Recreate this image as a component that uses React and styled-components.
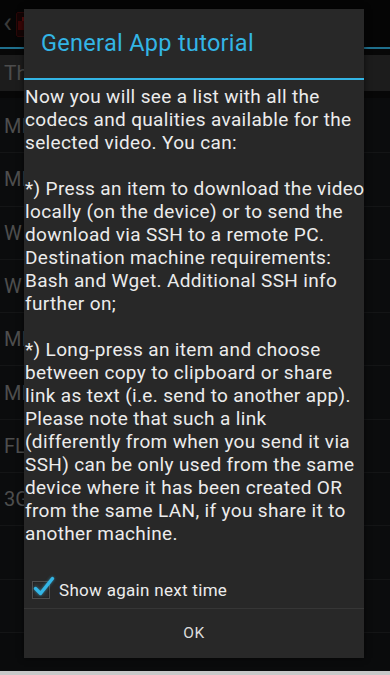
import React from 'react';
import styled, { createGlobalStyle } from 'styled-components';

const GlobalStyle = createGlobalStyle`
  html, body {
    margin: 0;
    padding: 0;
    background: #000;
  }
  body {
    font-family: Roboto, "Noto Sans", sans-serif;
    -webkit-font-smoothing: antialiased;
  }
`;

const bodyLines = [
  'Now you will see a list with all the',
  'codecs and qualities available for the',
  'selected video. You can:',
  '',
  '*) Press an item to download the video',
  'locally (on the device) or to send the',
  'download via SSH to a remote PC.',
  'Destination machine requirements:',
  'Bash and Wget. Additional SSH info',
  'further on;',
  '',
  '*) Long-press an item and choose',
  'between copy to clipboard or share',
  'link as text (i.e. send to another app).',
  'Please note that such a link',
  '(differently from when you send it via',
  'SSH) can be only used from the same',
  'device where it has been created OR',
  'from the same LAN, if you share it to',
  'another machine.',
];

const rows = ['MI', 'MI', 'W', 'W', 'MI', 'MI', 'FL', '3G', '', ''];

const App = () => {
  return (
    <>
      <GlobalStyle />
      <Screen>
        <ActionBar>
          <BackChevron>‹</BackChevron>
          <AppIcon>
            <svg width="13" height="25" viewBox="0 0 13 25">
              <rect x="0.5" y="0.5" width="12" height="24" rx="1.5" fill="#140404" stroke="#2a0808" />
              <rect x="6" y="5" width="6" height="6" fill="#5a0c0c" />
              <rect x="2" y="9" width="7" height="9" fill="#3a0606" />
            </svg>
          </AppIcon>
        </ActionBar>
        <HeaderRow>
          <HeaderTab>Th</HeaderTab>
        </HeaderRow>
        <List>
          {rows.map((r, i) => (
            <ListRow key={i}>{r}</ListRow>
          ))}
        </List>
        <NavStrip />

        <Dialog>
          <Title>General App tutorial</Title>
          <Body>
            {bodyLines.map((line, i) => (
              <Line key={i}>{line || '\u00a0'}</Line>
            ))}
          </Body>
          <CheckRow>
            <CheckBox>
              <svg width="24" height="24" viewBox="0 0 24 24">
                <path d="M4.5 13.5 L9.5 18.5 L21.5 3.5" fill="none" stroke="#33b5e5" strokeWidth="3.4" strokeLinecap="round" strokeLinejoin="round" />
              </svg>
            </CheckBox>
            <CheckLabel>Show again next time</CheckLabel>
          </CheckRow>
          <ButtonBar>
            <DialogButton>OK</DialogButton>
          </ButtonBar>
        </Dialog>
      </Screen>
    </>
  );
};

const Screen = styled.div`
  position: relative;
  width: 390px;
  height: 675px;
  overflow: hidden;
  background: #0a0b0c;
  display: flex;
  flex-direction: column;
`;

const ActionBar = styled.div`
  height: 47px;
  background: #050505;
  border-bottom: 2px solid #1f6f8c;
  display: flex;
  align-items: center;
  gap: 4px;
  padding-left: 3px;
  box-sizing: content-box;
`;

const BackChevron = styled.span`
  color: #3a3a3a;
  font-size: 30px;
  line-height: 1;
  margin-top: -4px;
`;

const AppIcon = styled.div`
  display: flex;
  margin-top: 2px;
`;

const HeaderRow = styled.div`
  height: 49px;
  padding-top: 6px;
  box-sizing: border-box;
  background: #070707;
`;

const HeaderTab = styled.div`
  height: 36px;
  background: #1c1c1c;
  color: #4c4c4c;
  font-size: 21px;
  display: flex;
  align-items: center;
  padding-left: 4px;
`;

const List = styled.div`
  display: flex;
  flex-direction: column;
  margin-top: 2px;
`;

const ListRow = styled.div`
  height: 53.3px;
  box-sizing: border-box;
  border-bottom: 1px solid #141516;
  background: #0b0c0d;
  color: #4e4e4e;
  font-size: 20px;
  display: flex;
  align-items: center;
  padding-left: 4px;
`;

const NavStrip = styled.div`
  position: absolute;
  left: 0;
  right: 0;
  bottom: 0;
  height: 4px;
  background: #c8c8c8;
`;

const Dialog = styled.div`
  position: absolute;
  top: 9px;
  left: 24px;
  width: 340px;
  height: 649px;
  background: #282828;
  box-shadow: 0 0 6px rgba(0, 0, 0, 0.6);
  display: flex;
  flex-direction: column;
  overflow: hidden;
`;

const Title = styled.div`
  height: 71px;
  box-sizing: border-box;
  border-bottom: 2px solid #33b5e5;
  color: #33b5e5;
  font-size: 23.5px;
  letter-spacing: 0.3px;
  display: flex;
  align-items: center;
  padding-left: 17px;
  padding-bottom: 1px;
`;

const Body = styled.div`
  padding-top: 5px;
  padding-left: 1px;
  color: #ececec;
  font-size: 19px;
  letter-spacing: 0.35px;
  line-height: 23px;
`;

const Line = styled.div`
  white-space: nowrap;
`;

const CheckRow = styled.div`
  margin-top: 26px;
  height: 37px;
  display: flex;
  align-items: center;
  padding-left: 8px;
  gap: 9px;
  border-bottom: 1px solid #363636;
`;

const CheckBox = styled.div`
  position: relative;
  width: 16px;
  height: 16px;
  border: 1px solid #4e4e4e;
  background: #2c2c2c;
  box-shadow: inset 0 0 2px rgba(0, 0, 0, 0.6);

  svg {
    position: absolute;
    left: -2px;
    top: -7px;
    filter: drop-shadow(0 0 1.5px rgba(51, 181, 229, 0.6));
  }
`;

const CheckLabel = styled.span`
  color: #ececec;
  font-size: 17px;
  letter-spacing: 0.3px;
`;

const ButtonBar = styled.div`
  flex: 1;
  display: flex;
`;

const DialogButton = styled.button`
  flex: 1;
  background: transparent;
  border: none;
  color: #dcdcdc;
  font-family: Roboto, "Noto Sans", sans-serif;
  font-size: 15.5px;
  letter-spacing: 0.5px;
  padding: 0;
  padding-bottom: 2px;
`;

export default App;
